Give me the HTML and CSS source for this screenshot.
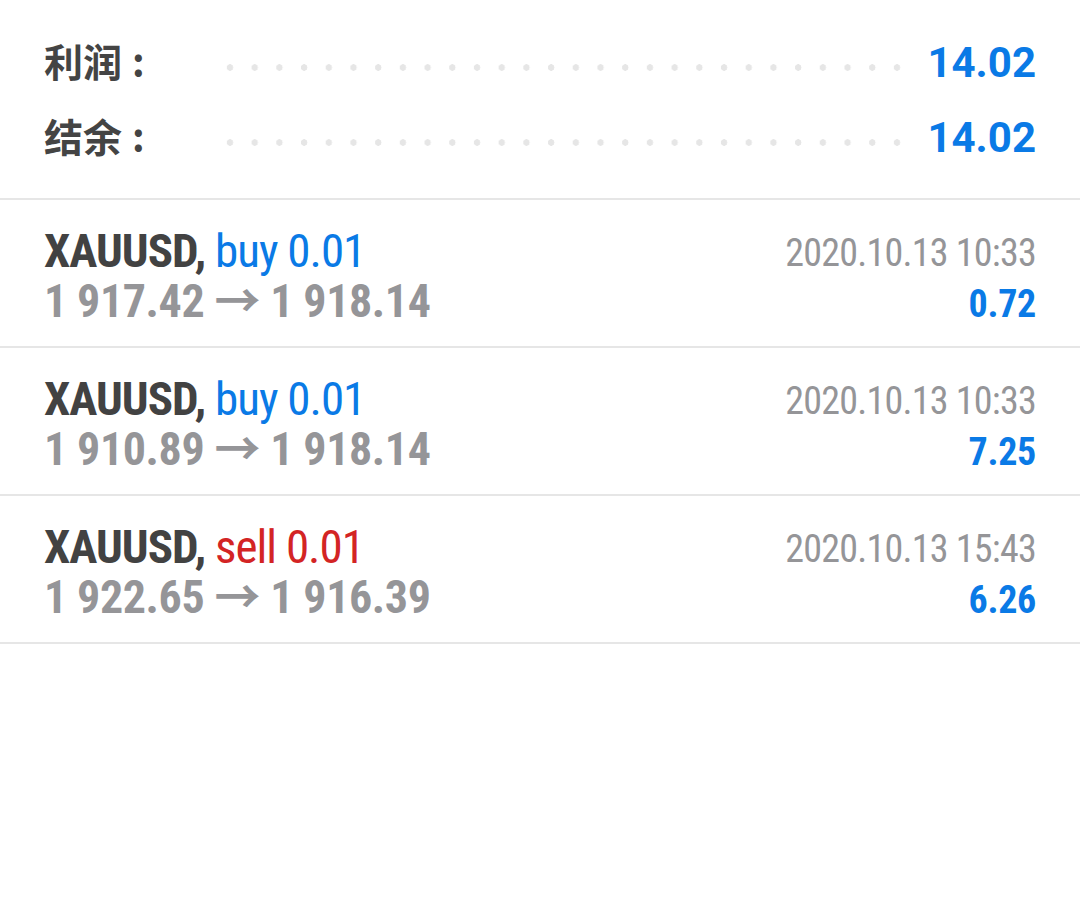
FILE: index.html
```html
<!DOCTYPE html>
<html lang="zh">
<head>
<meta charset="utf-8">
<link rel="stylesheet" href="styles.css">
</head>
<body>
<div class="summary">
  <div class="sum-row">
    <span class="sum-label">利润<span class="colon">:</span></span>
    <span class="dots"></span>
    <span class="sum-value">14.02</span>
  </div>
  <div class="sum-row">
    <span class="sum-label">结余<span class="colon">:</span></span>
    <span class="dots"></span>
    <span class="sum-value">14.02</span>
  </div>
</div>
<div class="deals">
  <div class="deal">
    <div class="deal-left">
      <div class="deal-title"><span class="sym">XAUUSD,</span> <span class="buy">buy 0.01</span></div>
      <div class="deal-prices">1 917.42 → 1 918.14</div>
    </div>
    <div class="deal-right">
      <div class="deal-time">2020.10.13 10:33</div>
      <div class="deal-profit">0.72</div>
    </div>
  </div>
  <div class="deal">
    <div class="deal-left">
      <div class="deal-title"><span class="sym">XAUUSD,</span> <span class="buy">buy 0.01</span></div>
      <div class="deal-prices">1 910.89 → 1 918.14</div>
    </div>
    <div class="deal-right">
      <div class="deal-time">2020.10.13 10:33</div>
      <div class="deal-profit">7.25</div>
    </div>
  </div>
  <div class="deal">
    <div class="deal-left">
      <div class="deal-title"><span class="sym">XAUUSD,</span> <span class="sell">sell 0.01</span></div>
      <div class="deal-prices">1 922.65 → 1 916.39</div>
    </div>
    <div class="deal-right">
      <div class="deal-time">2020.10.13 15:43</div>
      <div class="deal-profit">6.26</div>
    </div>
  </div>
</div>
</body>
</html>
```
FILE: styles.css
```css
html, body {
  margin: 0;
  padding: 0;
  background: #ffffff;
}
body {
  width: 1080px;
  height: 908px;
  font-family: "Roboto Condensed", Roboto, "Noto Sans CJK SC", sans-serif;
}
.summary {
  padding: 23px 44px 25px 44px;
  border-bottom: 2px solid #e6e6e6;
}
.sum-row {
  display: flex;
  align-items: baseline;
  height: 75px;
  line-height: 75px;
}
.sum-label {
  font-family: "Noto Sans CJK SC", sans-serif;
  font-weight: 700;
  font-size: 39px;
  color: #444444;
  width: 174px;
}
.colon {
  margin-left: 10px;
}
.dots {
  align-self: flex-start;
  flex: 1;
  height: 7px;
  margin-top: 41px;
  margin-right: 18px;
  background-image: radial-gradient(circle, #e6e6e6 3px, transparent 3.5px);
  background-size: 24px 7px;
  background-repeat: space no-repeat;
}
.sum-value {
  font-family: Roboto, sans-serif;
  font-weight: 700;
  font-size: 42px;
  color: #0a7ae6;
}
.deal {
  display: flex;
  justify-content: space-between;
  align-items: flex-start;
  box-sizing: border-box;
  padding: 25px 44px 0 44px;
  height: 148px;
  border-bottom: 2px solid #e6e6e6;
  font-stretch: condensed;
}
.deal-left, .deal-right {
  display: flex;
  flex-direction: column;
}
.deal-right {
  align-items: flex-end;
  padding-top: 3px;
}
.deal-title {
  font-size: 47px;
  line-height: 51px;
  letter-spacing: -1px;
}
.sym {
  font-weight: 700;
  color: #424242;
}
.buy { color: #0a7ae6; }
.sell { color: #d32424; }
.deal-prices {
  font-size: 46px;
  line-height: 51px;
  font-weight: 700;
  letter-spacing: -0.4px;
  color: #959598;
}
.deal-time {
  font-size: 38px;
  line-height: 51px;
  letter-spacing: -0.75px;
  color: #959598;
}
.deal-profit {
  font-size: 38px;
  line-height: 51px;
  font-weight: 700;
  letter-spacing: -0.3px;
  color: #0a7ae6;
}
```
